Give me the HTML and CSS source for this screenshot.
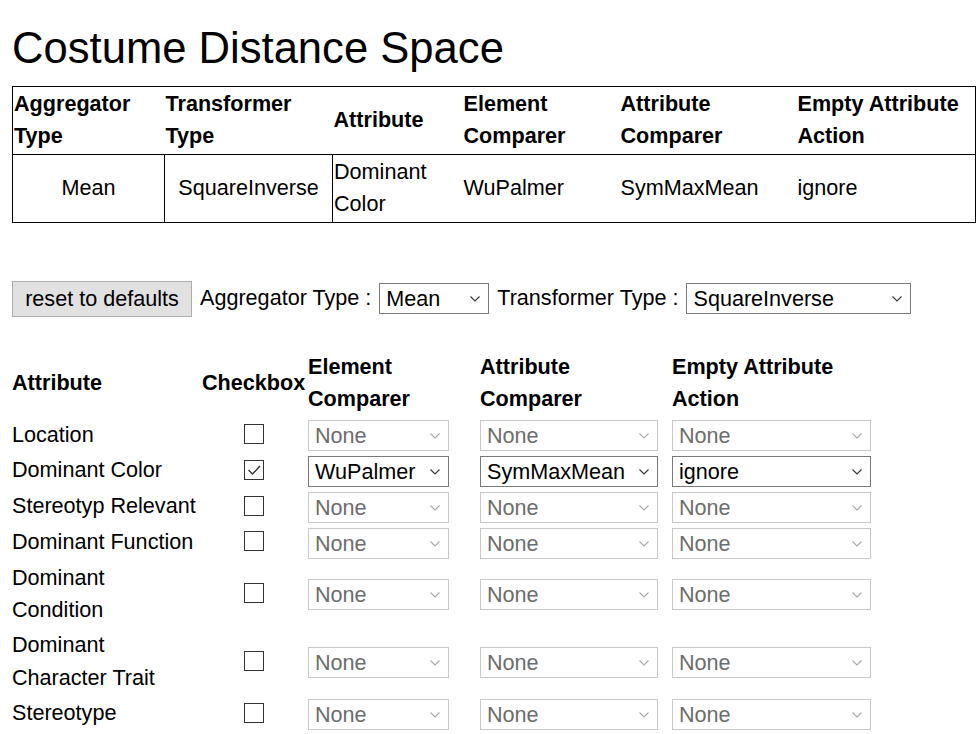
FILE: index.html
```html
<!DOCTYPE html>
<html>
<head>
<meta charset="utf-8">
<title>Costume Distance Space</title>
<link rel="stylesheet" href="styles.css">
</head>
<body>
<div class="page">
  <h1 class="title">Costume Distance Space</h1>

  <table class="summary">
    <colgroup>
      <col class="c1"><col class="c2"><col class="c3"><col class="c4"><col class="c5"><col class="c6">
    </colgroup>
    <thead>
      <tr>
        <th>Aggregator Type</th>
        <th>Transformer Type</th>
        <th>Attribute</th>
        <th>Element Comparer</th>
        <th>Attribute Comparer</th>
        <th>Empty Attribute Action</th>
      </tr>
    </thead>
    <tbody>
      <tr>
        <td class="center ruled">Mean</td>
        <td class="center ruled">SquareInverse</td>
        <td>Dominant Color</td>
        <td>WuPalmer</td>
        <td>SymMaxMean</td>
        <td>ignore</td>
      </tr>
    </tbody>
  </table>

  <div class="controls">
    <button class="btn" type="button">reset to defaults</button>
    <span class="lbl">Aggregator Type :</span>
    <span class="sel w-agg"><select><option>Mean</option></select><svg class="chev" viewBox="0 0 10 6"><path d="M0.5 0.5 L5 5 L9.5 0.5"/></svg></span>
    <span class="lbl">Transformer Type :</span>
    <span class="sel w-tr"><select><option>SquareInverse</option></select><svg class="chev" viewBox="0 0 10 6"><path d="M0.5 0.5 L5 5 L9.5 0.5"/></svg></span>
  </div>

  <table class="attrs">
    <colgroup>
      <col class="a1"><col class="a2"><col class="a3"><col class="a4"><col class="a5">
    </colgroup>
    <thead>
      <tr>
        <th>Attribute</th>
        <th>Checkbox</th>
        <th>Element Comparer</th>
        <th>Attribute Comparer</th>
        <th>Empty Attribute Action</th>
      </tr>
    </thead>
    <tbody>
      <tr>
        <td>Location</td>
        <td class="cb"><span class="box"></span></td>
        <td><span class="sel dis w-el"><select disabled><option>None</option></select><svg class="chev" viewBox="0 0 10 6"><path d="M0.5 0.5 L5 5 L9.5 0.5"/></svg></span></td>
        <td><span class="sel dis w-ac"><select disabled><option>None</option></select><svg class="chev" viewBox="0 0 10 6"><path d="M0.5 0.5 L5 5 L9.5 0.5"/></svg></span></td>
        <td><span class="sel dis w-ea"><select disabled><option>None</option></select><svg class="chev" viewBox="0 0 10 6"><path d="M0.5 0.5 L5 5 L9.5 0.5"/></svg></span></td>
      </tr>
      <tr>
        <td>Dominant Color</td>
        <td class="cb"><span class="box"><svg class="tick" viewBox="0 0 18 18"><path d="M3.5 9 L7.5 13 L15 5"/></svg></span></td>
        <td><span class="sel w-el"><select><option>WuPalmer</option></select><svg class="chev" viewBox="0 0 10 6"><path d="M0.5 0.5 L5 5 L9.5 0.5"/></svg></span></td>
        <td><span class="sel w-ac"><select><option>SymMaxMean</option></select><svg class="chev" viewBox="0 0 10 6"><path d="M0.5 0.5 L5 5 L9.5 0.5"/></svg></span></td>
        <td><span class="sel w-ea"><select><option>ignore</option></select><svg class="chev" viewBox="0 0 10 6"><path d="M0.5 0.5 L5 5 L9.5 0.5"/></svg></span></td>
      </tr>
      <tr>
        <td>Stereotyp Relevant</td>
        <td class="cb"><span class="box"></span></td>
        <td><span class="sel dis w-el"><select disabled><option>None</option></select><svg class="chev" viewBox="0 0 10 6"><path d="M0.5 0.5 L5 5 L9.5 0.5"/></svg></span></td>
        <td><span class="sel dis w-ac"><select disabled><option>None</option></select><svg class="chev" viewBox="0 0 10 6"><path d="M0.5 0.5 L5 5 L9.5 0.5"/></svg></span></td>
        <td><span class="sel dis w-ea"><select disabled><option>None</option></select><svg class="chev" viewBox="0 0 10 6"><path d="M0.5 0.5 L5 5 L9.5 0.5"/></svg></span></td>
      </tr>
      <tr>
        <td>Dominant Function</td>
        <td class="cb"><span class="box"></span></td>
        <td><span class="sel dis w-el"><select disabled><option>None</option></select><svg class="chev" viewBox="0 0 10 6"><path d="M0.5 0.5 L5 5 L9.5 0.5"/></svg></span></td>
        <td><span class="sel dis w-ac"><select disabled><option>None</option></select><svg class="chev" viewBox="0 0 10 6"><path d="M0.5 0.5 L5 5 L9.5 0.5"/></svg></span></td>
        <td><span class="sel dis w-ea"><select disabled><option>None</option></select><svg class="chev" viewBox="0 0 10 6"><path d="M0.5 0.5 L5 5 L9.5 0.5"/></svg></span></td>
      </tr>
      <tr>
        <td>Dominant Condition</td>
        <td class="cb"><span class="box"></span></td>
        <td><span class="sel dis w-el"><select disabled><option>None</option></select><svg class="chev" viewBox="0 0 10 6"><path d="M0.5 0.5 L5 5 L9.5 0.5"/></svg></span></td>
        <td><span class="sel dis w-ac"><select disabled><option>None</option></select><svg class="chev" viewBox="0 0 10 6"><path d="M0.5 0.5 L5 5 L9.5 0.5"/></svg></span></td>
        <td><span class="sel dis w-ea"><select disabled><option>None</option></select><svg class="chev" viewBox="0 0 10 6"><path d="M0.5 0.5 L5 5 L9.5 0.5"/></svg></span></td>
      </tr>
      <tr>
        <td>Dominant Character Trait</td>
        <td class="cb"><span class="box"></span></td>
        <td><span class="sel dis w-el"><select disabled><option>None</option></select><svg class="chev" viewBox="0 0 10 6"><path d="M0.5 0.5 L5 5 L9.5 0.5"/></svg></span></td>
        <td><span class="sel dis w-ac"><select disabled><option>None</option></select><svg class="chev" viewBox="0 0 10 6"><path d="M0.5 0.5 L5 5 L9.5 0.5"/></svg></span></td>
        <td><span class="sel dis w-ea"><select disabled><option>None</option></select><svg class="chev" viewBox="0 0 10 6"><path d="M0.5 0.5 L5 5 L9.5 0.5"/></svg></span></td>
      </tr>
      <tr>
        <td>Stereotype</td>
        <td class="cb"><span class="box"></span></td>
        <td><span class="sel dis w-el"><select disabled><option>None</option></select><svg class="chev" viewBox="0 0 10 6"><path d="M0.5 0.5 L5 5 L9.5 0.5"/></svg></span></td>
        <td><span class="sel dis w-ac"><select disabled><option>None</option></select><svg class="chev" viewBox="0 0 10 6"><path d="M0.5 0.5 L5 5 L9.5 0.5"/></svg></span></td>
        <td><span class="sel dis w-ea"><select disabled><option>None</option></select><svg class="chev" viewBox="0 0 10 6"><path d="M0.5 0.5 L5 5 L9.5 0.5"/></svg></span></td>
      </tr>
    </tbody>
  </table>
</div>
</body>
</html>
```

FILE: styles.css
```css
html, body {
  margin: 0;
  padding: 0;
  background: #ffffff;
}

body {
  font-family: "Liberation Sans", Arial, sans-serif;
  font-size: 21.6px;
  line-height: 32.4px;
  color: #000000;
}

.page {
  padding: 23px 0 0 12px;
}

.title {
  font-size: 43.6px;
  font-weight: normal;
  line-height: 50px;
  margin: 0 0 13px 0;
}

/* summary table */
.summary {
  width: 963px;
  table-layout: fixed;
  border-collapse: collapse;
  border: 1px solid #000000;
}

.summary .c1 { width: 152px; }
.summary .c2 { width: 168px; }
.summary .c3 { width: 130px; }
.summary .c4 { width: 157px; }
.summary .c5 { width: 177px; }
.summary .c6 { width: 179px; }

.summary th,
.summary td {
  padding: 1px;
  vertical-align: middle;
  text-align: left;
}

.summary th {
  font-weight: bold;
  border-bottom: 1px solid #000000;
}

.summary td.center {
  text-align: center;
}

.summary td.ruled {
  border-right: 1px solid #000000;
}

/* controls row */
.controls {
  display: flex;
  align-items: center;
  margin-top: 58px;
  height: 36px;
}

.btn {
  font-family: inherit;
  font-size: 21.6px;
  color: #000000;
  background: #e1e1e1;
  border: 1px solid #adadad;
  border-radius: 0;
  height: 36px;
  width: 180px;
  padding: 0;
  margin: 0 8px 0 0;
  line-height: 34px;
}

.lbl {
  margin-right: 8px;
  white-space: nowrap;
}

.controls .w-agg {
  margin-right: 8px;
}

/* select wrapper */
.sel {
  position: relative;
  display: inline-block;
  vertical-align: middle;
  height: 31px;
}

.sel select {
  -webkit-appearance: none;
  appearance: none;
  display: block;
  box-sizing: border-box;
  height: 31px;
  width: 100%;
  margin: 0;
  padding: 0 28px 0 6px;
  font-family: "Liberation Sans", Arial, sans-serif;
  font-size: 21.6px;
  line-height: 29px;
  color: #000000;
  background: #ffffff;
  border: 1px solid #7a7a7a;
  border-radius: 0;
  opacity: 1;
}

.sel .chev {
  position: absolute;
  right: 9px;
  top: 13px;
  width: 10px;
  height: 6px;
  fill: none;
  stroke: #333333;
  stroke-width: 1.1;
  pointer-events: none;
}

.sel.dis select {
  color: #6d6d6d;
  border-color: #c8c8c8;
}

.sel.dis .chev {
  stroke: #a8a8a8;
}

.w-agg { width: 110px; }
.w-tr  { width: 225px; }
.w-el  { width: 141px; }
.w-ac  { width: 178px; }
.w-ea  { width: 199px; }

/* attribute table */
.attrs {
  margin-top: 32px;
  margin-left: -1px;
  border-collapse: separate;
  border-spacing: 0 1px;
  table-layout: fixed;
  width: 865px;
}

.attrs .a1 { width: 190px; }
.attrs .a2 { width: 106px; }
.attrs .a3 { width: 172px; }
.attrs .a4 { width: 192px; }
.attrs .a5 { width: 205px; }

.attrs th,
.attrs td {
  padding: 1px;
  vertical-align: middle;
  text-align: left;
}

.attrs th {
  font-weight: bold;
}

.attrs td.cb {
  text-align: center;
}

.box {
  display: inline-block;
  vertical-align: middle;
  box-sizing: border-box;
  width: 20px;
  height: 20px;
  border: 1px solid #333333;
  background: #ffffff;
  margin-top: -4px;
}

.box .tick {
  display: block;
  width: 18px;
  height: 18px;
  fill: none;
  stroke: #333333;
  stroke-width: 1.4;
}
```
